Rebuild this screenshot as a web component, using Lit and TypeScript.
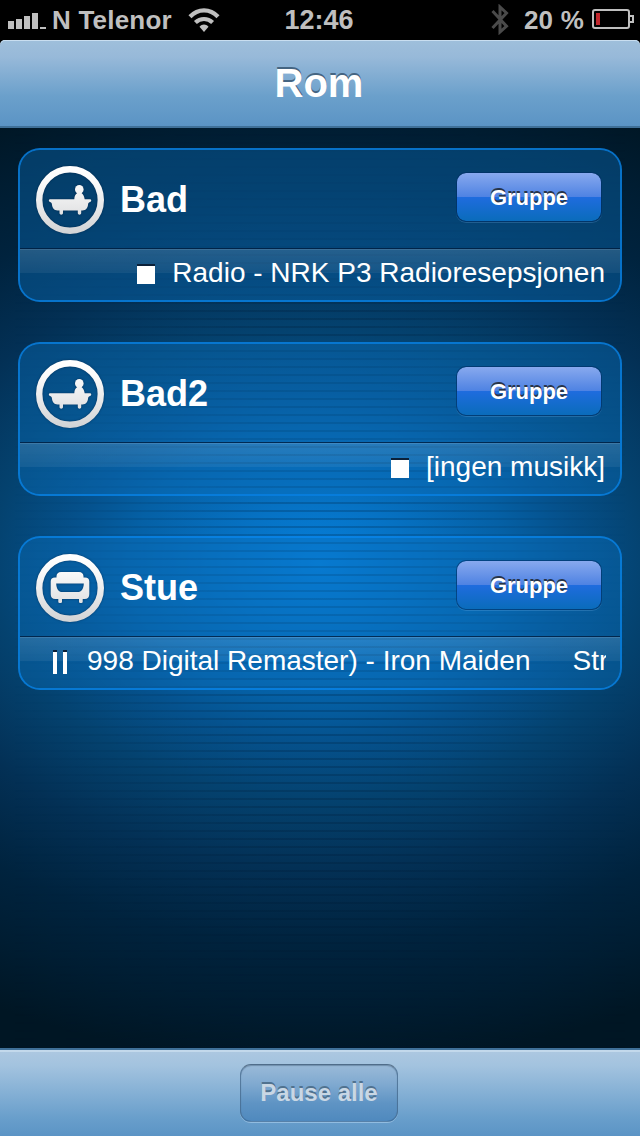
import { LitElement, html, svg, css } from "lit";
import { customElement, property } from "lit/decorators.js";

type RoomIcon = "bath" | "sofa";
type PlayState = "stop" | "pause";

interface Room {
  name: string;
  icon: RoomIcon;
  state: PlayState;
  track: string[];
}

const rooms: Room[] = [
  { name: "Bad", icon: "bath", state: "stop", track: ["Radio - NRK P3 Radioresepsjonen"] },
  { name: "Bad2", icon: "bath", state: "stop", track: ["[ingen musikk]"] },
  { name: "Stue", icon: "sofa", state: "pause", track: ["998 Digital Remaster) - Iron Maiden", "Str"] },
];

const bath = svg`
  <circle cx="43.3" cy="23.4" r="4.3"/>
  <path d="M38.3 33.2C38.4 30 39.6 28 41.3 27h4.2c1.5 1 2.6 3 3.2 6.200H54c1.6 0 1.7 2.2.2 2.8-1.2.4-1.9.6-2.1 2.2-.3 3.600-2.200 6.200-5.600 6.200h-1.300v2.600c0 2.200-3.400 2.200-3.400 0v-2.600H27v2.600c0 2.200-3.500 2.200-3.500 0v-2.600h-2c-3.400 0-5.300-2.600-5.600-6.200-.2-1.600-.8-1.800-2-2.200-1.500-.6-1.400-2.800.2-2.800z"/>`;

const sofa = svg`
  <path fill-rule="evenodd" d="M25 18h18c2.700 0 4.500 1.600 4.500 4.300v1.200h1.500c2.800 0 4.300 1.500 4.300 4v12.500c0 3.300-1.500 5-4.600 5H19.300c-3.100 0-4.600-1.700-4.600-5V27.500c0-2.500 1.500-4 4.300-4h1.500v-1.200c0-2.700 1.800-4.300 4.500-4.300zM20.200 29.500c.2 5.400 2.200 8.600 6.200 8.600h15.200c4 0 6-3.200 6.200-8.600z"/>
  <path d="M22.300 44h3.700v4c0 1.300-3.700 1.300-3.700 0zM43 44h3.700v4c0 1.300-3.700 1.300-3.700 0z"/>`;

@customElement("room-card")
class RoomCard extends LitElement {
  @property({ attribute: false }) room!: Room;

  static styles = css`
    :host {
      display: flex;
      flex-direction: column;
      box-sizing: border-box;
      height: 154px;
      border: 2px solid rgba(8, 132, 232, 0.82);
      border-radius: 22px;
      background: rgba(10, 112, 190, 0.4);
      background-clip: padding-box;
      overflow: hidden;
    }
    .head {
      display: flex;
      align-items: center;
      height: 98px;
      padding: 0 18px 0 16px;
      box-sizing: border-box;
    }
    .icon {
      display: block;
      flex: none;
      width: 68px;
      height: 68px;
      margin-top: 2px;
      overflow: visible;
      filter: drop-shadow(0 0 1px rgba(0, 20, 50, 0.5));
    }
    .name {
      flex: 1;
      margin: 2px 0 0 16px;
      font-size: 36px;
      font-weight: bold;
      line-height: 40px;
    }
    .group {
      flex: none;
      width: 146px;
      height: 50px;
      margin: 0 0 5px;
      padding: 1px 0 0;
      border: 1px solid rgba(0, 45, 100, 0.6);
      border-radius: 10px;
      background: linear-gradient(#88a9ee, #4f83e3 49%, #1f6cdf 50%, #0a6cbb) padding-box;
      box-shadow: 0 1px 0 rgba(120, 180, 230, 0.25);
      color: #fff;
      font: bold 22px/47px "Liberation Sans", Arial, sans-serif;
      text-align: center;
      text-shadow: 0 -2px 0 #273449;
    }
    .now {
      display: flex;
      align-items: flex-start;
      justify-content: flex-end;
      box-sizing: border-box;
      height: 52px;
      padding: 0 15px 0 33px;
      border-top: 1px solid rgba(0, 28, 60, 0.8);
      background: linear-gradient(rgba(255, 255, 255, 0.13), rgba(255, 255, 255, 0.06)) 0 0 / 100% 24px no-repeat;
      box-shadow: inset 0 1px 0 rgba(255, 255, 255, 0.1);
    }
    .glyph {
      flex: none;
      display: block;
    }
    .stop {
      width: 18px;
      height: 20px;
      margin: 15px 17px 0 0;
    }
    .pause {
      width: 14px;
      height: 24px;
      margin: 13px 20px 0 0;
    }
    .track {
      display: flex;
      gap: 42px;
      min-width: 0;
      overflow: hidden;
      white-space: nowrap;
      font-size: 28px;
      line-height: 32px;
      margin-top: 8px;
    }
    .track.scroll {
      flex: 1;
      margin-right: -1px;
    }
  `;

  render() {
    const { name, icon, state, track } = this.room;
    return html`
      <div class="head">
        <svg class="icon" viewBox="0 0 68 68">
          <defs>
            <linearGradient id="metal" gradientUnits="userSpaceOnUse" x1="0" y1="0" x2="0" y2="68">
              <stop offset="0" stop-color="#fff"/>
              <stop offset=".25" stop-color="#fafafa"/>
              <stop offset="1" stop-color="#d2d3d5"/>
            </linearGradient>
          </defs>
          <circle cx="34" cy="34" r="30.800" fill="none" stroke="url(#metal)" stroke-width="6.400"/>
          <g fill="url(#metal)">${icon === "bath" ? bath : sofa}</g>
        </svg>
        <div class="name">${name}</div>
        <button class="group">Gruppe</button>
      </div>
      <div class="now">
        ${state === "stop"
          ? html`<svg class="glyph stop" viewBox="0 0 18 20"><path fill="#0b2038" d="M0 0h18v2H0z"/><path fill="#fff" d="M0 2h18v18H0z"/></svg>`
          : html`<svg class="glyph pause" viewBox="0 0 14 24"><path fill="#0b2038" d="M0 0h4v2H0zM10 0h4v2h-4z"/><path fill="#fff" d="M0 2h4v22H0zM10 2h4v22h-4z"/></svg>`}
        <div class="track ${track.length > 1 ? "scroll" : ""}">${track.map((t) => html`<span>${t}</span>`)}</div>
      </div>
    `;
  }
}

@customElement("app-root")
class AppRoot extends LitElement {
  static styles = css`
    :host {
      display: flex;
      flex-direction: column;
      height: 1136px;
      background: #000;
      color: #fff;
      font-family: "Liberation Sans", Arial, sans-serif;
      overflow: hidden;
    }
    .status {
      display: grid;
      grid-template-columns: 1fr auto 1fr;
      align-items: center;
      height: 40px;
      box-sizing: border-box;
      padding: 0 6px 0 8px;
      color: #bfbfbf;
      font-size: 26px;
      font-weight: bold;
      line-height: 30px;
    }
    .left, .right {
      display: flex;
      align-items: center;
    }
    .right {
      justify-content: flex-end;
    }
    .signal {
      width: 38px;
      height: 16px;
      margin: 2px 6px 0 0;
    }
    .carrier {
      letter-spacing: 0.2px;
    }
    .wifi {
      width: 32px;
      height: 24px;
      margin: 0 0 1px 16px;
    }
    .clock {
      font-size: 27px;
      margin-right: 4px;
    }
    .bt {
      width: 18px;
      height: 31px;
      margin: 0 15px 2px 0;
    }
    .pct {
      letter-spacing: 0.2px;
    }
    .battery {
      width: 42px;
      height: 20px;
      margin: 0 0 2px 8px;
    }
    .nav {
      display: flex;
      align-items: center;
      justify-content: center;
      height: 88px;
      box-sizing: border-box;
      padding: 1px 2px 0 0;
      border-bottom: 2px solid #3f7098;
      border-radius: 5px 5px 0 0;
      background: linear-gradient(#9fbfdb, #97b9d9 20%, #6ba0cb 65%, #5b94c5);
      box-shadow: inset 0 1px 0 #c9def0;
      font-size: 40px;
      font-weight: bold;
      text-shadow: 0 -2px 0 #456582;
    }
    .stage {
      flex: 1;
      display: grid;
      grid-template-columns: minmax(0, 1fr);
      background: radial-gradient(ellipse 700px 500px at 320px 436px,
        #0580dc 0, #0672c4 12.5%, #0560a5 27%, #05528e 35%, #04426f 47%, #033055 61%, #00233e 76%, #001d32 88%, #001624 100%);
    }
    .lines, .rooms {
      grid-area: 1 / 1;
    }
    .lines {
      background: repeating-linear-gradient(transparent 0 6px, rgba(0, 25, 50, 0.22) 6px 8px);
      -webkit-mask-image: linear-gradient(90deg, transparent 2%, #000 42%, #000 58%, transparent 98%);
      mask-image: linear-gradient(90deg, transparent 2%, #000 42%, #000 58%, transparent 98%);
    }
    .rooms {
      display: flex;
      flex-direction: column;
      gap: 40px;
      padding: 20px 18px;
      isolation: isolate;
    }
    .toolbar {
      display: flex;
      align-items: flex-start;
      justify-content: center;
      height: 88px;
      box-sizing: border-box;
      padding: 14px 2px 0 0;
      border-top: 2px solid #3f7098;
      background: linear-gradient(#adc8e1, #a3c3df 18%, #689ecb 80%, #5b94c5);
      box-shadow: inset 0 2px 0 #c3d9ec;
    }
    .all {
      width: 158px;
      height: 58px;
      padding: 0;
      border: 1px solid;
      border-color: rgba(80, 105, 130, 0.85) rgba(70, 105, 140, 0.75) rgba(60, 105, 150, 0.7);
      border-radius: 11px;
      background: linear-gradient(#9abad8, #7fa9d0 35%, #5f94c4 68%, #4f89be);
      box-shadow: 0 1px 0 rgba(190, 220, 245, 0.5), inset 0 1px 1px rgba(70, 100, 130, 0.5);
      color: #c9d7e4;
      font: bold 24px/56px "Liberation Sans", Arial, sans-serif;
      text-shadow: 0 -2px 0 #50728f;
    }
  `;

  render() {
    return html`
      <div class="status">
        <div class="left">
          <svg class="signal" viewBox="0 0 38 16" fill="#bfbfbf">
            <path d="M0 8h6v8H0zM8 6h6v10H8zM16 3h6v13h-6zM24 0h6v16h-6zM32 14h6v2h-6z"/>
          </svg>
          <span class="carrier">N Telenor</span>
          <svg class="wifi" viewBox="0 0 32 24" fill="none" stroke="#bfbfbf" stroke-width="4.200">
            <path d="M2 8.700C10 .2 22 .2 30 8.700"/>
            <path d="M7.400 14.600C12.400 9.800 19.600 9.800 24.600 14.600"/>
            <path fill="#bfbfbf" stroke="none" d="M11.500 18.800C14 15.600 18 15.600 20.500 18.800L16 24z"/>
          </svg>
        </div>
        <span class="clock">12:46</span>
        <div class="right">
          <svg class="bt" viewBox="0 0 18 31" fill="none" stroke="#4a4a4a" stroke-width="3">
            <path d="M1.500 7L15.500 22.200 9 28V3L15.500 9 1.500 24"/>
          </svg>
          <span class="pct">20 %</span>
          <svg class="battery" viewBox="0 0 42 20">
            <path fill="none" stroke="#bfbfbf" stroke-width="2" d="M3 1H35Q37 1 37 3V17Q37 19 35 19H3Q1 19 1 17V3Q1 1 3 1zM37 7h4v6h-4"/>
            <path fill="#c1272d" d="M4 4h4v12H4z"/>
          </svg>
        </div>
      </div>
      <div class="nav">Rom</div>
      <div class="stage">
        <div class="lines"></div>
        <div class="rooms">${rooms.map((r) => html`<room-card .room=${r}></room-card>`)}</div>
      </div>
      <div class="toolbar"><button class="all">Pause alle</button></div>
    `;
  }
}
